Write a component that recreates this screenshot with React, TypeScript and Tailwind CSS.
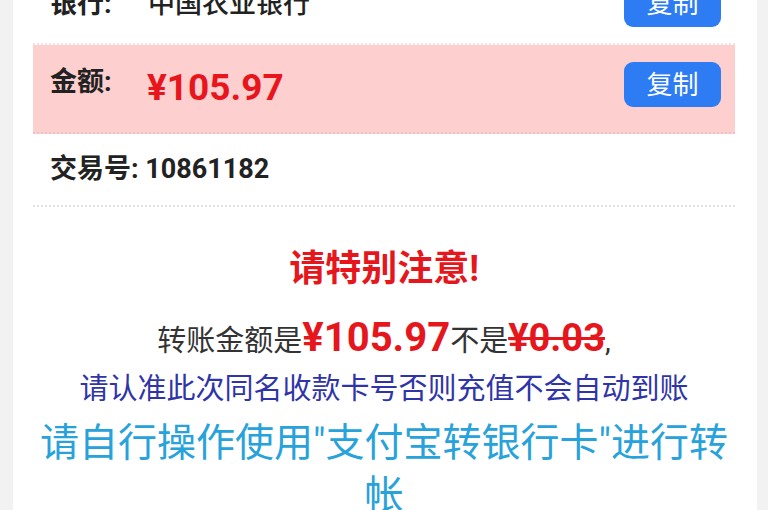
import React from 'react';

const font = { fontFamily: 'Roboto, "Noto Sans CJK SC", sans-serif' };

const CopyButton: React.FC = () => (
    <button className="w-[97px] h-[45px] rounded-[9px] bg-[#2d7cf4] text-white text-[26px] leading-none flex items-center justify-center">
        复制
    </button>
);

export default function App() {
    return (
        <div className="w-[768px] h-[510px] overflow-hidden bg-[#f2f2f2]" style={font}>
            <div className="ml-[13px] mr-[11px] bg-white px-[20px] pr-[22px] -mt-[35px] pb-10">
                <div className="h-[80px] flex items-center pl-[17px] pr-[14px] border-b-2 border-dotted border-[#f0e4e4]">
                    <span className="w-[98px] text-[27px] font-bold text-[#222]">银行:</span>
                    <span className="flex-grow text-[27px] font-medium text-[#222]">中国农业银行</span>
                    <CopyButton />
                </div>
                <div className="h-[89px] flex items-center pl-[17px] pr-[14px] pb-[8px] bg-[#fdcfcf] border-b-2 border-dotted border-[#e8c4c4]">
                    <span className="w-[97px] text-[27px] font-bold text-[#222] mb-[4px]">金额:</span>
                    <span className="flex-grow text-[37px] font-bold text-[#e8151d] mt-[6px]">¥105.97</span>
                    <CopyButton />
                </div>
                <div className="h-[73px] flex items-center pl-[17px] border-b-2 border-dotted border-[#e2e2e2]">
                    <span className="text-[27px] font-bold text-[#222]">交易号: 10861182</span>
                </div>
                <div className="pt-[41px] text-center">
                    <div className="text-[36px] leading-[42px] font-bold text-[#e5161c]">请特别注意!</div>
                    <div className="mt-[23px] leading-[50px] text-[29px] text-[#333]">
                        转账金额是
                        <span className="text-[40px] font-bold text-[#e5161c]">¥105.97</span>
                        不是
                        <span className="text-[38px] font-bold text-[#e5161c] line-through">¥0.03</span>
                        ,
                    </div>
                    <div className="leading-[46px] text-[29px] text-[#2f35a8]">请认准此次同名收款卡号否则充值不会自动到账</div>
                    <div className="mt-[5px] leading-[52px] text-[39px] text-[#27a2da]">
                        请自行操作使用"支付宝转银行卡"进行转帐
                    </div>
                </div>
            </div>
        </div>
    );
}
